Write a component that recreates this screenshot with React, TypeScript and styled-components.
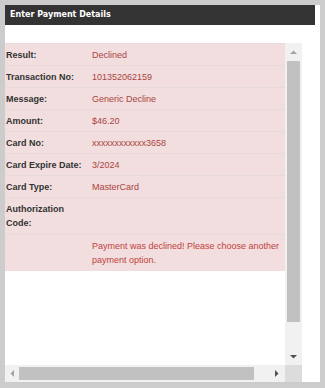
import React from "react";
import styled, { createGlobalStyle } from "styled-components";

const GlobalStyle = createGlobalStyle`
  html, body {
    margin: 0;
    padding: 0;
    background: #cccccc;
  }
  body {
    font-family: "Liberation Sans", Arial, sans-serif;
  }
`;

const Frame = styled.div`
  padding: 5px;
  width: 325px;
  height: 388px;
  box-sizing: border-box;
`;

const Panel = styled.div`
  width: 315px;
  height: 377px;
  background: #ffffff;
  display: flex;
  flex-direction: column;
`;

const TitleBar = styled.div`
  width: 310px;
  height: 20px;
  background: #333333;
  color: #ffffff;
  font-family: "DejaVu Sans", Verdana, sans-serif;
  font-weight: bold;
  font-size: 8px;
  line-height: 20px;
  padding-left: 5px;
  box-sizing: border-box;
`;

const Body = styled.div`
  padding: 18px 18px 0 0;
`;

// viewport with its scrollbars, like a browser's overflow: scroll box
const ScrollBox = styled.div`
  display: grid;
  grid-template-columns: 280px 17px;
  grid-template-rows: 322px 17px;
`;

const Viewport = styled.div`
  overflow: hidden;
`;

const ResultTable = styled.table`
  width: 280px;
  border-collapse: collapse;
  background: #f2dede;
  font-size: 9px;
  line-height: 14px;
`;

const Row = styled.tr<{ $tall?: boolean }>`
  border-top: 1px solid #e6dada;
  & > td {
    padding-bottom: ${(p) => (p.$tall ? 4 : 3)}px;
  }
`;

const Label = styled.td`
  width: 84px;
  padding: 4px 1px 3px 1px;
  color: #333333;
  font-weight: bold;
  vertical-align: top;
`;

const Value = styled.td<{ $alert?: boolean }>`
  padding: 4px 1px 3px 1px;
  color: ${(p) => (p.$alert ? "#c0413d" : "#a94442")};
  vertical-align: top;
`;

const ScrollBar = styled.div<{ $vertical?: boolean }>`
  background: #f1f1f1;
  display: flex;
  flex-direction: ${(p) => (p.$vertical ? "column" : "row")};
`;

const ArrowButton = styled.div<{ $size: number }>`
  flex: 0 0 ${(p) => p.$size}px;
  display: flex;
  align-items: center;
  justify-content: center;
`;

const Track = styled.div<{ $vertical?: boolean }>`
  flex: 1;
  display: flex;
  flex-direction: ${(p) => (p.$vertical ? "column" : "row")};
  padding: ${(p) => (p.$vertical ? "1px 2px" : "2px 0")};
`;

const Thumb = styled.div<{ $length: number }>`
  background: #c1c1c1;
  flex: 0 0 ${(p) => p.$length}px;
`;

const Corner = styled.div`
  background: #dcdcdc;
`;

type Dir = "up" | "down" | "left" | "right";

const Arrow = ({ dir, active }: { dir: Dir; active?: boolean }) => {
  const pts: Record<Dir, string> = {
    up: "0,4 7,4 3.5,0.5",
    down: "0,0 7,0 3.5,3.5",
    left: "4,0 4,7 0.5,3.5",
    right: "0,0 0,7 3.5,3.5",
  };
  const vertical = dir === "up" || dir === "down";
  return (
    <svg
      width={vertical ? 7 : 4}
      height={vertical ? 4 : 7}
      viewBox={vertical ? "0 0 7 4" : "0 0 4 7"}
    >
      <polygon points={pts[dir]} fill={active ? "#505050" : "#a3a3a3"} />
    </svg>
  );
};

const rows: [string, string][] = [
  ["Result:", "Declined"],
  ["Transaction No:", "101352062159"],
  ["Message:", "Generic Decline"],
  ["Amount:", "$46.20"],
  ["Card No:", "xxxxxxxxxxxx3658"],
  ["Card Expire Date:", "3/2024"],
  ["Card Type:", "MasterCard"],
];

export default function App() {
  return (
    <>
      <GlobalStyle />
      <Frame>
        <Panel>
          <TitleBar>Enter Payment Details</TitleBar>
          <Body>
            <ScrollBox>
              <Viewport>
                <ResultTable>
                  <tbody>
                    {rows.map(([label, value]) => (
                      <Row key={label}>
                        <Label>{label}</Label>
                        <Value>{value}</Value>
                      </Row>
                    ))}
                    <Row $tall>
                      <Label>Authorization Code:</Label>
                      <Value />
                    </Row>
                    <Row $tall>
                      <Label />
                      <Value $alert>
                        Payment was declined! Please choose another payment
                        option.
                      </Value>
                    </Row>
                  </tbody>
                </ResultTable>
              </Viewport>
              <ScrollBar $vertical>
                <ArrowButton $size={17}>
                  <Arrow dir="up" />
                </ArrowButton>
                <Track $vertical>
                  <Thumb $length={261} />
                </Track>
                <ArrowButton $size={17}>
                  <Arrow dir="down" active />
                </ArrowButton>
              </ScrollBar>
              <ScrollBar>
                <ArrowButton $size={14}>
                  <Arrow dir="left" />
                </ArrowButton>
                <Track>
                  <Thumb $length={235} />
                </Track>
                <ArrowButton $size={17}>
                  <Arrow dir="right" active />
                </ArrowButton>
              </ScrollBar>
              <Corner />
            </ScrollBox>
          </Body>
        </Panel>
      </Frame>
    </>
  );
}
